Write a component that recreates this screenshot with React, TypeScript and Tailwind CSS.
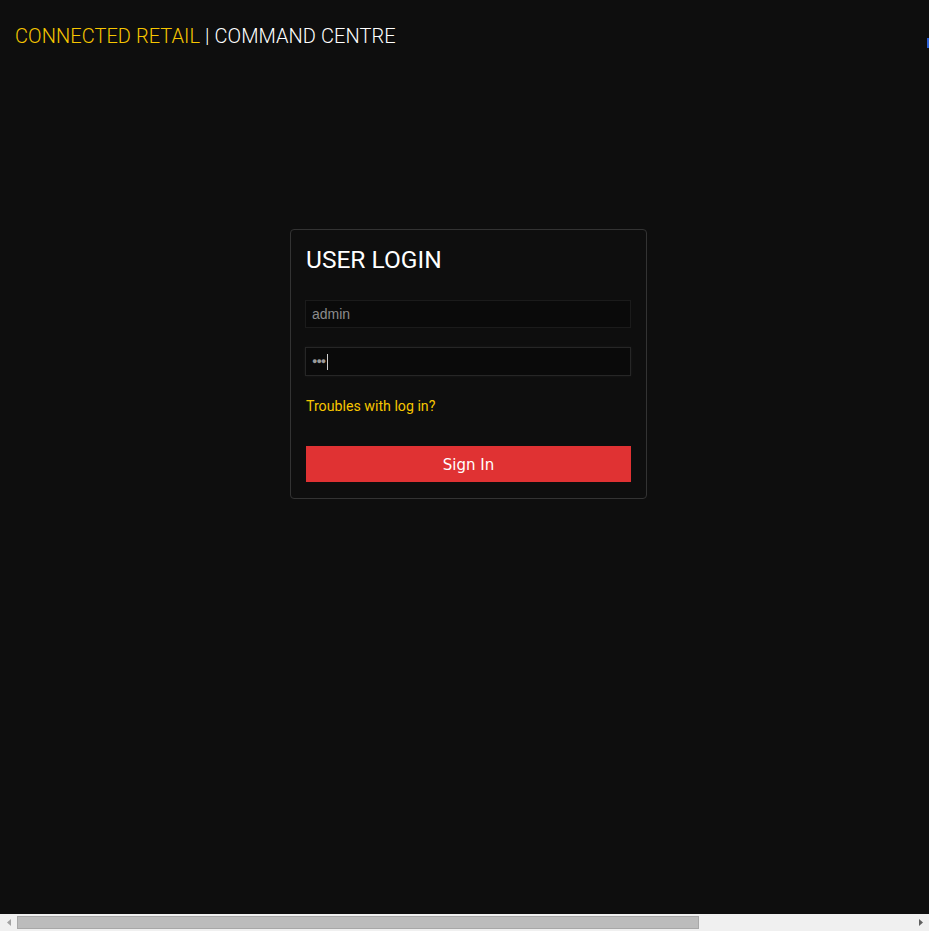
const App = () => {
  return (
    <div className="relative flex h-[931px] w-full flex-col overflow-hidden bg-[#0e0e0e]" style={{ fontFamily: 'Roboto, "Liberation Sans", sans-serif' }}>
      <header className="flex items-start justify-between pl-[15px] pt-[24px]">
        <div className="text-[20px] leading-[24px] font-light tracking-[0.06px]">
          <span className="text-[#f7c600]">CONNECTED RETAIL</span>
          <span className="text-white"> | COMMAND CENTRE</span>
        </div>
        <div className="mt-[14px] h-[10px] w-[2px] bg-[#2f63d8]" />
      </header>

      <main className="flex flex-1 justify-center pl-2 pt-[181px]">
        <div className="h-[270px] w-[357px] rounded-[4px] border border-[#333333] px-[15px] pt-[13px] pb-[15px]">
          <h1 className="text-[24.5px] leading-[34px] font-normal text-white">USER LOGIN</h1>

          <form className="mt-[23px] flex flex-col" onSubmit={e => e.preventDefault()}>
            <input
              type="text"
              defaultValue="admin"
              className="h-[28px] w-[326px] -ml-px border border-[#1b1b1b] bg-[#0a0a0a] px-[6px] text-[14px] text-[#8c8c8c] outline-none"
              style={{ fontFamily: '"Liberation Sans", Arial, sans-serif' }}
            />
            <div className="mt-[19px] flex h-[29px] w-[326px] -ml-px items-center border border-[#262626] bg-[#0a0a0a] px-[6px] shadow-[0_0_3px_rgba(255,255,255,0.06)]">
              <span className="text-[9px] leading-none tracking-[-1px] text-[#9a9a9a]">●●●</span>
              <span className="ml-[2px] h-[16px] w-px bg-[#cfcfcf]" />
            </div>

            <a href="#" className="mt-[22px] text-[14.2px] leading-[16px] text-[#f7c600]">Troubles with log in?</a>

            <button
              type="submit"
              className="mt-[32px] h-[36px] w-[325px] bg-[#e03233] pt-[2px] text-[15px] text-white"
              style={{ fontFamily: '"DejaVu Sans", Verdana, sans-serif' }}
            >
              Sign In
            </button>
          </form>
        </div>
      </main>

      <div className="flex h-[17px] w-full items-center bg-[#f0f0f0]">
        <div className="flex h-full w-[17px] items-center justify-center">
          <svg width="4" height="7" viewBox="0 0 4 7"><path d="M4 0 L0 3.5 L4 7 Z" fill="#a3a3a3" /></svg>
        </div>
        <div className="h-[13px] w-[682px] border border-[#a8a8a8] bg-[#bcbcbc]" />
        <div className="flex-1" />
        <div className="flex h-full w-[17px] items-center justify-center">
          <svg width="4" height="7" viewBox="0 0 4 7"><path d="M0 0 L4 3.5 L0 7 Z" fill="#606060" /></svg>
        </div>
      </div>
    </div>
  );
};

export default App;
